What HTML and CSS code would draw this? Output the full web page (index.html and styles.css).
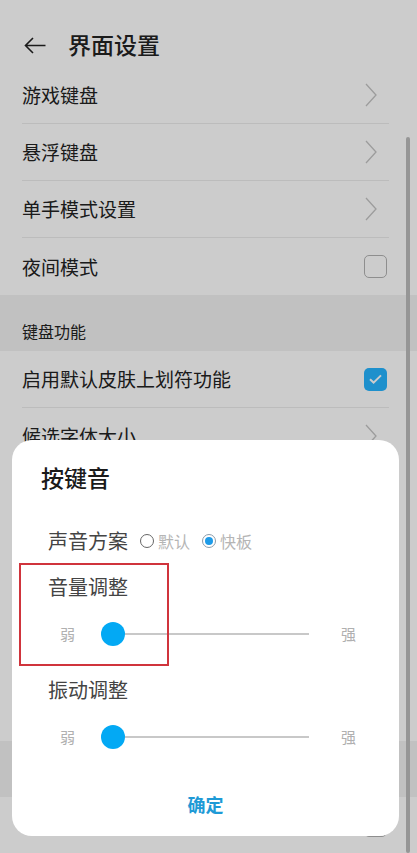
FILE: index.html
```html
<!DOCTYPE html>
<html lang="zh-CN">
<head>
    <meta charset="UTF-8">
    <meta name="viewport" content="width=device-width, initial-scale=1.0">
    <title>界面设置</title>
    <link rel="stylesheet" href="styles.css">
</head>
<body>
    <div class="page">
        <div class="status-bar"></div>
        <header class="toolbar">
            <svg class="back" width="22" height="17" viewBox="0 0 22 17">
                <path d="M21.5 8.5H1.5M9 1L1.5 8.5 9 16" fill="none" stroke="#222" stroke-width="1.6"/>
            </svg>
            <h1>界面设置</h1>
        </header>

        <ul class="list">
            <li class="item">
                <span>游戏键盘</span>
                <svg class="chevron" width="12" height="24" viewBox="0 0 12 24"><path d="M1 1l10 11L1 23" fill="none" stroke="#c4c4c4" stroke-width="1.3"/></svg>
            </li>
            <li class="item">
                <span>悬浮键盘</span>
                <svg class="chevron" width="12" height="24" viewBox="0 0 12 24"><path d="M1 1l10 11L1 23" fill="none" stroke="#c4c4c4" stroke-width="1.3"/></svg>
            </li>
            <li class="item">
                <span>单手模式设置</span>
                <svg class="chevron" width="12" height="24" viewBox="0 0 12 24"><path d="M1 1l10 11L1 23" fill="none" stroke="#c4c4c4" stroke-width="1.3"/></svg>
            </li>
            <li class="item">
                <span>夜间模式</span>
                <span class="checkbox"></span>
            </li>
        </ul>

        <div class="section-title">键盘功能</div>
        <ul class="list">
            <li class="item">
                <span>启用默认皮肤上划符功能</span>
                <span class="checkbox checked">
                    <svg width="15" height="12" viewBox="0 0 15 12"><path d="M2 6.2l3.6 3.4L13 2.4" fill="none" stroke="#fff" stroke-width="2"/></svg>
                </span>
            </li>
            <li class="item">
                <span>候选字体大小</span>
                <svg class="chevron" width="12" height="24" viewBox="0 0 12 24"><path d="M1 1l10 11L1 23" fill="none" stroke="#c4c4c4" stroke-width="1.3"/></svg>
            </li>
            <!-- rows under the dialog -->
            <li class="item filler"></li>
        </ul>

        <div class="section-title"></div>
        <ul class="list">
            <li class="item">
                <span></span>
                <span class="checkbox"></span>
            </li>
        </ul>

        <div class="scrollbar"></div>
    </div>

    <div class="scrim"></div>

    <div class="dialog">
        <h2>按键音</h2>

        <div class="scheme">
            <span class="label">声音方案</span>
            <span class="option"><span class="radio"></span>默认</span>
            <span class="option"><span class="radio on"></span>快板</span>
        </div>

        <div class="label volume-label">音量调整</div>
        <div class="slider">
            <span class="end">弱</span>
            <div class="track"><span class="thumb"></span></div>
            <span class="end strong">强</span>
        </div>

        <div class="label vibrate-label">振动调整</div>
        <div class="slider">
            <span class="end">弱</span>
            <div class="track"><span class="thumb"></span></div>
            <span class="end strong">强</span>
        </div>

        <button type="button" class="ok-btn">确定</button>

        <div class="mark"></div>
    </div>
</body>
</html>
```

FILE: styles.css
```css
* {
    box-sizing: border-box;
    margin: 0;
    padding: 0;
    font-family: "Noto Sans CJK SC", "Noto Sans", sans-serif;
}
body {
    width: 417px;
    height: 853px;
    overflow: hidden;
    background-color: #fff;
}
.page {
    position: relative;
    height: 853px;
    overflow: hidden;
}
.status-bar {
    height: 20px;
}
.toolbar {
    display: flex;
    align-items: center;
    height: 47px;
    padding-left: 24px;
}
.back {
    margin-top: 3px;
}
.toolbar h1 {
    margin-left: 22px;
    font-size: 23px;
    font-weight: 500;
    line-height: 30px;
    color: #222;
}
.list {
    list-style: none;
}
.item {
    display: flex;
    align-items: center;
    justify-content: space-between;
    height: 57px;
    margin: 0 28px 0 22px;
    border-bottom: 1px solid #ebebeb;
    font-size: 19px;
    line-height: 26px;
    color: #222;
}
.item:last-child {
    border-bottom: none;
}
.item.filler {
    height: 276px;
}
.chevron {
    margin-right: 12px;
}
.checkbox {
    display: flex;
    align-items: center;
    justify-content: center;
    width: 23px;
    height: 23px;
    margin-right: 2px;
    border: 1.5px solid #b2b2b2;
    border-radius: 5px;
}
.checkbox.checked {
    border: none;
    background-color: #26b4ff;
}
.section-title {
    height: 56px;
    padding: 25px 0 0 22px;
    background-color: #f2f2f2;
    font-size: 16px;
    line-height: 22px;
    color: #222;
}
.scrollbar {
    position: absolute;
    top: 137px;
    right: 7px;
    bottom: 0;
    width: 4px;
    border-radius: 2px;
    background-color: #bcbcbc;
}

/* dim layer behind the dialog */
.scrim {
    position: fixed;
    top: 0;
    left: 0;
    right: 0;
    bottom: 0;
    background-color: rgba(0, 0, 0, 0.2);
}
.dialog {
    position: fixed;
    top: 440px;
    left: 12px;
    width: 387px;
    height: 396px;
    padding-top: 23px;
    border-radius: 20px;
    background-color: #fff;
    display: flex;
    flex-direction: column;
}
.dialog h2 {
    padding-left: 29px;
    font-size: 23px;
    font-weight: 500;
    line-height: 28px;
    color: #1a1a1a;
}
.label {
    font-size: 20px;
    line-height: 28px;
    color: #444;
}
.scheme {
    display: flex;
    align-items: center;
    height: 28px;
    margin-top: 36px;
    padding-left: 36px;
}
.option {
    display: flex;
    align-items: center;
    font-size: 16px;
    color: #b5b5b5;
}
.scheme .label {
    margin-right: 12px;
}
.option + .option {
    margin-left: 12px;
}
.radio {
    display: flex;
    align-items: center;
    justify-content: center;
    width: 14px;
    height: 14px;
    margin-right: 4px;
    border: 1.3px solid #666;
    border-radius: 50%;
}
.radio.on {
    border-color: #8b9cab;
}
.radio.on::after {
    content: "";
    width: 8px;
    height: 8px;
    border-radius: 50%;
    background-color: #1e9be8;
}
.volume-label {
    margin-top: 18px;
    padding-left: 36px;
}
.vibrate-label {
    margin-top: 27px;
    padding-left: 36px;
}
.slider {
    display: flex;
    align-items: center;
    height: 30px;
    margin-top: 18px;
    padding: 0 43px 0 48px;
}
.end {
    font-size: 15px;
    line-height: 20px;
    color: #b0b0b0;
}
.track {
    position: relative;
    flex: 1;
    height: 2px;
    margin: 0 32px 0 26px;
    background-color: #c8c8c8;
}
.thumb {
    position: absolute;
    top: -11px;
    left: 0;
    width: 24px;
    height: 24px;
    border-radius: 50%;
    background-color: #03a9f4;
}
.ok-btn {
    align-self: center;
    margin-top: 38px;
    border: none;
    background: none;
    font-size: 18px;
    font-weight: 700;
    line-height: 28px;
    color: #1e9ad6;
    cursor: pointer;
}
.mark {
    position: absolute;
    top: 123px;
    left: 7px;
    width: 150px;
    height: 103px;
    border: 2px solid #d0343c;
}
```
